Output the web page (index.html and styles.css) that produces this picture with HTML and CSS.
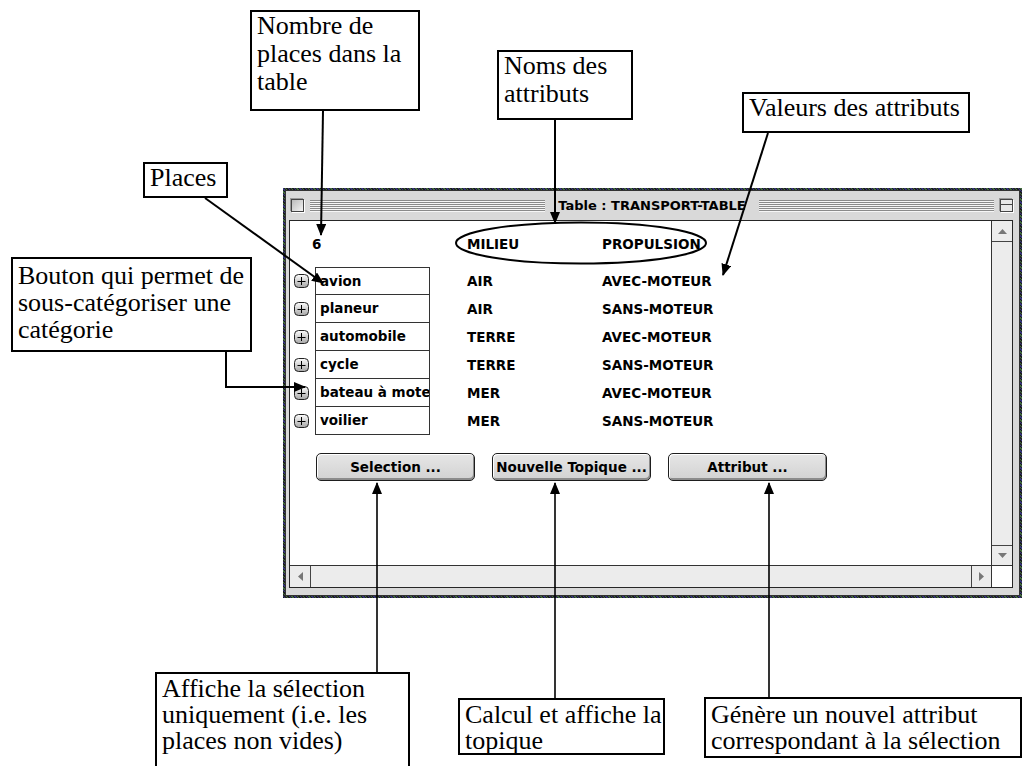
FILE: index.html
```html
<!DOCTYPE html>
<html lang="fr">
<head>
    <meta charset="UTF-8">
    <title>Table : TRANSPORT-TABLE</title>
    <link rel="stylesheet" href="styles.css">
</head>
<body>
<div class="canvas">
    <div class="note note-nombre">Nombre de<br>places dans la<br>table</div>
    <div class="note note-noms">Noms des<br>attributs</div>
    <div class="note note-valeurs">Valeurs des attributs</div>
    <div class="note note-places">Places</div>
    <div class="note note-bouton">Bouton qui permet de<br>sous-catégoriser une<br>catégorie</div>
    <div class="note note-affiche">Affiche la sélection<br>uniquement (i.e. les<br>places non vides)</div>
    <div class="note note-calcul">Calcul et affiche la<br>topique</div>
    <div class="note note-genere">Génère un nouvel attribut<br>correspondant à la sélection</div>

    <div class="window">
        <div class="frame">
            <div class="titlebar">
                <span class="closebox"></span>
                <span class="stripes"></span>
                <span class="title">Table : TRANSPORT-TABLE</span>
                <span class="stripes"></span>
                <span class="shadebox"></span>
            </div>
            <div class="body">
                <div class="main">
                    <div class="content">
                        <div class="header">
                            <span class="count">6</span>
                            <span class="col">MILIEU</span>
                            <span>PROPULSION</span>
                        </div>
                        <div class="rows">
                            <div class="row">
                                <svg class="plus" width="15" height="14" viewBox="0 0 15 14"><rect x="0.5" y="0.5" width="14" height="13" rx="4" fill="url(#pg)" stroke="#222"/><path d="M7.5 3v8M3.5 7.5h8" stroke="#000"/></svg>
                                <span class="name">avion</span><span class="col">AIR</span><span>AVEC-MOTEUR</span>
                            </div>
                            <div class="row">
                                <svg class="plus" width="15" height="14" viewBox="0 0 15 14"><rect x="0.5" y="0.5" width="14" height="13" rx="4" fill="url(#pg)" stroke="#222"/><path d="M7.5 3v8M3.5 7.5h8" stroke="#000"/></svg>
                                <span class="name">planeur</span><span class="col">AIR</span><span>SANS-MOTEUR</span>
                            </div>
                            <div class="row">
                                <svg class="plus" width="15" height="14" viewBox="0 0 15 14"><rect x="0.5" y="0.5" width="14" height="13" rx="4" fill="url(#pg)" stroke="#222"/><path d="M7.5 3v8M3.5 7.5h8" stroke="#000"/></svg>
                                <span class="name">automobile</span><span class="col">TERRE</span><span>AVEC-MOTEUR</span>
                            </div>
                            <div class="row">
                                <svg class="plus" width="15" height="14" viewBox="0 0 15 14"><rect x="0.5" y="0.5" width="14" height="13" rx="4" fill="url(#pg)" stroke="#222"/><path d="M7.5 3v8M3.5 7.5h8" stroke="#000"/></svg>
                                <span class="name">cycle</span><span class="col">TERRE</span><span>SANS-MOTEUR</span>
                            </div>
                            <div class="row">
                                <svg class="plus" width="15" height="14" viewBox="0 0 15 14"><rect x="0.5" y="0.5" width="14" height="13" rx="4" fill="url(#pg)" stroke="#222"/><path d="M7.5 3v8M3.5 7.5h8" stroke="#000"/></svg>
                                <span class="name">bateau à moteur</span><span class="col">MER</span><span>AVEC-MOTEUR</span>
                            </div>
                            <div class="row">
                                <svg class="plus" width="15" height="14" viewBox="0 0 15 14"><rect x="0.5" y="0.5" width="14" height="13" rx="4" fill="url(#pg)" stroke="#222"/><path d="M7.5 3v8M3.5 7.5h8" stroke="#000"/></svg>
                                <span class="name">voilier</span><span class="col">MER</span><span>SANS-MOTEUR</span>
                            </div>
                        </div>
                        <div class="buttons">
                            <button class="btn">Selection ...</button>
                            <button class="btn">Nouvelle Topique ...</button>
                            <button class="btn">Attribut ...</button>
                        </div>
                    </div>
                    <div class="vscroll">
                        <div class="arrow arrow-up"><svg width="9" height="5"><path d="M0 5h9L4.5 0z" fill="#777"/></svg></div>
                        <div class="track"></div>
                        <div class="arrow arrow-down"><svg width="9" height="5"><path d="M0 0h9L4.5 5z" fill="#777"/></svg></div>
                    </div>
                </div>
                <div class="hscroll-row">
                    <div class="hscroll">
                        <div class="arrow arrow-left"><svg width="5" height="9"><path d="M5 0v9L0 4.5z" fill="#777"/></svg></div>
                        <div class="track"></div>
                        <div class="arrow arrow-right"><svg width="5" height="9"><path d="M0 0v9L5 4.5z" fill="#777"/></svg></div>
                    </div>
                    <div class="corner"></div>
                </div>
            </div>
        </div>
    </div>

    <svg class="marks" width="1026" height="766" viewBox="0 0 1026 766">
        <defs>
            <marker id="head" viewBox="0 0 12 10" markerWidth="12" markerHeight="10" refX="11" refY="5" orient="auto" markerUnits="userSpaceOnUse">
                <path d="M0 0L12 5L0 10z" fill="#000"/>
            </marker>
            <linearGradient id="pg" x1="0" y1="0" x2="0" y2="1">
                <stop offset="0" stop-color="#fdfdfd"/>
                <stop offset="1" stop-color="#a6a6a6"/>
            </linearGradient>
        </defs>
        <g stroke="#000" stroke-width="2" fill="none">
            <line x1="323" y1="111" x2="321" y2="235" marker-end="url(#head)"/>
            <line x1="555" y1="120" x2="555" y2="223" marker-end="url(#head)"/>
            <line x1="768" y1="133" x2="723" y2="275" marker-end="url(#head)"/>
            <line x1="205" y1="198" x2="323" y2="283" marker-end="url(#head)"/>
            <polyline points="226,352 226,387 305,387" marker-end="url(#head)"/>
            <ellipse cx="581" cy="243" rx="125" ry="20.5"/>
        </g>
        <g stroke="#000" stroke-width="1.6" fill="none">
            <line x1="377" y1="672" x2="377" y2="483" marker-end="url(#head)"/>
            <line x1="555" y1="698" x2="555" y2="483" marker-end="url(#head)"/>
            <line x1="769" y1="698" x2="769" y2="483" marker-end="url(#head)"/>
        </g>
    </svg>
</div>
</body>
</html>
```

FILE: styles.css
```css
body {
    margin: 0;
    background: #fff;
}
.canvas {
    position: relative;
    width: 1026px;
    height: 766px;
    overflow: hidden;
    font-family: "DejaVu Sans", sans-serif;
    color: #000;
}

/* annotation boxes */
.note {
    position: absolute;
    box-sizing: border-box;
    border: 2px solid #000;
    background: #fff;
    padding: 0 5px;
    font-family: "Liberation Serif", "Times New Roman", serif;
    font-size: 26px;
    line-height: 28px;
    white-space: nowrap;
    z-index: 2;
}
.note-nombre { left: 250px; top: 10px; width: 170px; height: 101px; }
.note-noms { left: 497px; top: 50px; width: 136px; height: 70px; }
.note-valeurs { left: 742px; top: 92px; width: 228px; height: 41px; }
.note-places { left: 143px; top: 162px; width: 85px; height: 36px; }
.note-bouton { left: 11px; top: 257px; width: 241px; height: 95px; line-height: 27px; padding-top: 3px; }
.note-affiche { left: 155px; top: 672px; width: 255px; height: 110px; line-height: 26px; padding-top: 2px; }
.note-calcul { left: 458px; top: 698px; width: 207px; height: 57px; line-height: 26px; padding-top: 2px; }
.note-genere { left: 704px; top: 697px; width: 318px; height: 61px; line-height: 26px; padding-top: 3px; }

.marks {
    position: absolute;
    left: 0;
    top: 0;
    z-index: 3;
    pointer-events: none;
}

/* mac window */
.window {
    position: absolute;
    left: 283px;
    top: 188px;
    width: 739px;
    height: 410px;
    box-sizing: border-box;
    padding: 2px;
    background: repeating-linear-gradient(45deg, #1c1c1c 0 1px, #34347e 1px 2px, #262626 2px 3px, #3f6a3f 3px 4px);
    z-index: 1;
}
.frame {
    height: 100%;
    box-sizing: border-box;
    border: 1px solid #333;
    background: #d9d9d9;
    display: flex;
    flex-direction: column;
}
.titlebar {
    height: 29px;
    display: flex;
    align-items: center;
    padding: 0 6px 0 5px;
    font-size: 13px;
    font-weight: bold;
}
.closebox, .shadebox {
    width: 11px;
    height: 11px;
    border: 1px solid #444;
    background: linear-gradient(135deg, #bbb, #f4f4f4);
    box-shadow: 1px 1px 0 #fff, -1px -1px 0 #999;
}
.shadebox {
    background: linear-gradient(#e8e8e8 0 4px, #444 4px 5px, #e8e8e8 5px);
}
.stripes {
    flex: 1;
    height: 12px;
    margin: 0 6px;
    background: repeating-linear-gradient(#8a8a8a 0 1px, #f6f6f6 1px 2px);
}
.title {
    padding: 0 7px;
    white-space: nowrap;
}
.body {
    flex: 1;
    margin: 0 6px 7px 3px;
    border: 1px solid #262626;
    display: flex;
    flex-direction: column;
    min-height: 0;
}
.main {
    flex: 1;
    display: flex;
    min-height: 0;
}
.content {
    flex: 1;
    background: #fff;
    padding-left: 4px;
    font-size: 13.5px;
    font-weight: bold;
}
.header {
    height: 46px;
    display: flex;
    align-items: center;
}
.count {
    margin-left: 18px;
    width: 155px;
}
.col {
    width: 135px;
}
.row {
    height: 28px;
    display: flex;
    align-items: center;
}
.plus {
    flex: none;
    margin-right: 6px;
}
.name {
    width: 115px;
    height: 28px;
    box-sizing: border-box;
    border: 1px solid #333;
    border-top: none;
    padding-left: 4px;
    line-height: 27px;
    overflow: hidden;
    white-space: nowrap;
    margin-right: 37px;
}
.row:first-child .name {
    border-top: 1px solid #333;
    line-height: 26px;
}
.buttons {
    display: flex;
    gap: 17px;
    margin: 18px 0 0 22px;
}
.btn {
    width: 159px;
    height: 28px;
    padding: 0;
    border: 1px solid #1e1e1e;
    border-radius: 5px;
    background: linear-gradient(#e6e6e6, #d2d2d2);
    box-shadow: inset 1px 1px 0 #fff, inset -1px -2px 0 #8c8c8c;
    font-family: "DejaVu Sans", sans-serif;
    font-size: 13.5px;
    font-weight: bold;
    color: #000;
    white-space: nowrap;
}

/* scroll bars */
.vscroll {
    width: 20px;
    border-left: 1px solid #333;
    background: #ececec;
    display: flex;
    flex-direction: column;
}
.track {
    flex: 1;
}
.arrow {
    display: flex;
    align-items: center;
    justify-content: center;
    background: #ececec;
}
.arrow svg {
    display: block;
}
.arrow-up {
    height: 20px;
    border-bottom: 1px solid #444;
}
.arrow-down {
    height: 19px;
    border-top: 1px solid #444;
}
.hscroll-row {
    height: 21px;
    border-top: 1px solid #333;
    display: flex;
}
.hscroll {
    flex: 1;
    display: flex;
    background: #ececec;
}
.arrow-left {
    width: 20px;
    border-right: 1px solid #444;
}
.arrow-right {
    width: 19px;
    border-left: 1px solid #444;
}
.corner {
    width: 20px;
    border-left: 1px solid #333;
    background: #fff;
}
```
